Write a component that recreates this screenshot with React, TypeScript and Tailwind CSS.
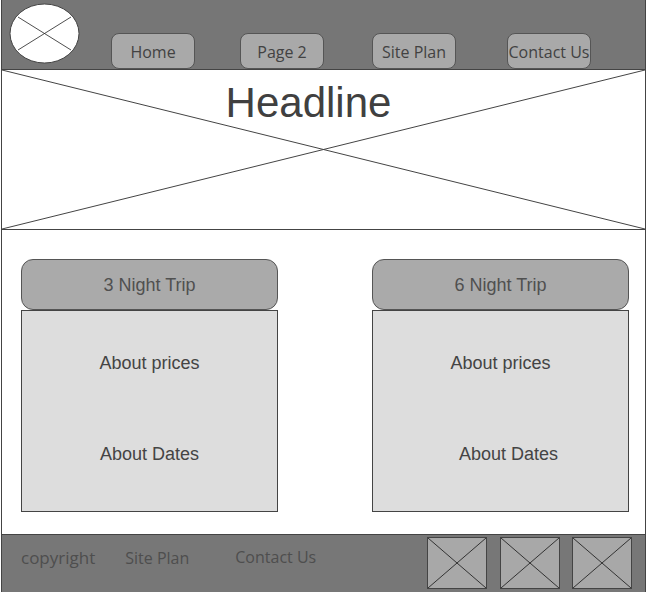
import React from "react";

const XLines = ({ stroke = "#333", width = 1 }: { stroke?: string; width?: number }) => (
  <svg className="absolute inset-0 h-full w-full" viewBox="0 0 100 100" preserveAspectRatio="none">
    <line x1="0" y1="0" x2="100" y2="100" stroke={stroke} strokeWidth={width} vectorEffect="non-scaling-stroke" />
    <line x1="0" y1="100" x2="100" y2="0" stroke={stroke} strokeWidth={width} vectorEffect="non-scaling-stroke" />
  </svg>
);

const NavBtn = ({ label, ml }: { label: string; ml: string }) => (
  <div
    className={`${ml} flex h-[36px] w-[84px] shrink-0 items-center justify-center whitespace-nowrap rounded-[8px] border border-[#555] bg-[#a9a9a9] pt-[2px] text-[16px] text-[#424242]`}
    style={{ fontFamily: '"Open Sans", sans-serif' }}
  >
    {label}
  </div>
);

const Card = ({ title, shiftDates }: { title: string; shiftDates?: boolean }) => (
  <div className="flex w-[257px] flex-col" style={{ fontFamily: '"Liberation Sans", Arial, sans-serif' }}>
    <div className="flex h-[51px] items-center justify-center rounded-[12px] border border-[#555] bg-[#aaaaaa] pt-[2px] text-[18px] text-[#505050]">
      {title}
    </div>
    <div className="flex h-[202px] flex-col items-center border border-[#444] bg-[#dddddd] text-[18px] text-[#444]">
      <div className="mt-[41px] leading-[22px]">About prices</div>
      <div className={`mt-[69px] leading-[22px] ${shiftDates ? "ml-[16px]" : ""}`}>About Dates</div>
    </div>
  </div>
);

const FooterBox = ({ ml }: { ml?: string }) => (
  <div className={`relative h-[52px] w-[60px] border border-[#444] bg-[#a8a8a8] ${ml ?? ""}`}>
    <XLines stroke="#333" />
  </div>
);

export default function App() {
  return (
    <div className="h-[592px] w-[647px] overflow-hidden bg-white">
      <div className="ml-[1px] flex h-[592px] w-[645px] flex-col border-x border-[#444]">
        {/* Header */}
        <div className="flex h-[70px] shrink-0 items-start border-b border-[#444] bg-[#767676]">
          <svg className="ml-[7px] mt-[3px] shrink-0" width="71" height="61" viewBox="0 0 71 61">
            <ellipse cx="35.5" cy="30.5" rx="34.5" ry="29.5" fill="#fff" stroke="#444" strokeWidth="1" />
            <line x1="9" y1="14" x2="62" y2="47" stroke="#222" strokeWidth="0.8" />
            <line x1="9" y1="47" x2="62" y2="14" stroke="#222" strokeWidth="0.8" />
          </svg>
          <div className="flex self-end">
            <NavBtn label="Home" ml="ml-[31px]" />
            <NavBtn label="Page 2" ml="ml-[45px]" />
            <NavBtn label="Site Plan" ml="ml-[48px]" />
            <NavBtn label="Contact Us" ml="ml-[51px]" />
          </div>
        </div>

        {/* Hero */}
        <div className="relative h-[160px] shrink-0 border-b border-[#444] bg-white">
          <XLines stroke="#444" />
          <div
            className="relative mt-[12px] pr-[30px] text-center text-[42px] leading-[42px] text-[#404040]"
            style={{ fontFamily: '"Liberation Sans", Arial, sans-serif' }}
          >
            Headline
          </div>
        </div>

        {/* Content */}
        <div className="flex flex-1 items-start gap-[94px] bg-white pl-[19px] pt-[29px]">
          <Card title="3 Night Trip" />
          <Card title="6 Night Trip" shiftDates />
        </div>

        {/* Footer */}
        <div
          className="flex h-[58px] shrink-0 items-start border-t border-[#444] bg-[#777777] pr-[13px]"
          style={{ fontFamily: '"Open Sans", sans-serif' }}
        >
          <div className="ml-[19px] mt-[11px] flex items-start text-[16px] leading-[24px] text-[#4e4e4e]">
            <span className="text-[17px]">copyright</span>
            <span className="ml-[30px]">Site Plan</span>
            <span className="ml-[46px] -mt-[1px]">Contact Us</span>
          </div>
          <div className="ml-auto mt-[2px] flex">
            <FooterBox />
            <FooterBox ml="ml-[13px]" />
            <FooterBox ml="ml-[12px]" />
          </div>
        </div>
      </div>
    </div>
  );
}
